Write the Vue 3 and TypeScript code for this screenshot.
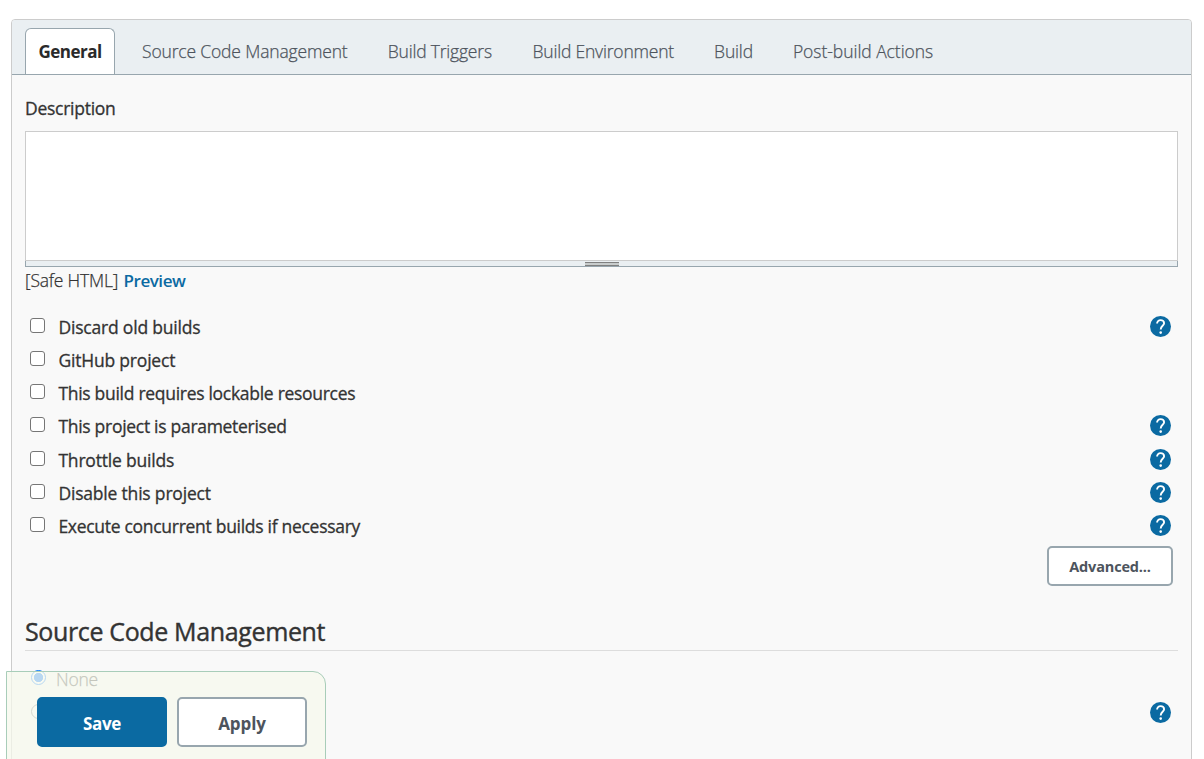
<script setup lang="ts">
interface Option { label: string; help: boolean; cls: string }
interface Tab { label: string; cls: string }

const tabs: Tab[] = [
  { label: 'General', cls: 'active' },
  { label: 'Source Code Management', cls: 't-scm' },
  { label: 'Build Triggers', cls: 't-triggers' },
  { label: 'Build Environment', cls: 't-env' },
  { label: 'Build', cls: 't-build' },
  { label: 'Post-build Actions', cls: 't-post' },
]
const options: Option[] = [
  { label: 'Discard old builds', help: true, cls: 'loose' },
  { label: 'GitHub project', help: false, cls: 'loose' },
  { label: 'This build requires lockable resources', help: false, cls: '' },
  { label: 'This project is parameterised', help: true, cls: '' },
  { label: 'Throttle builds', help: true, cls: 'loose' },
  { label: 'Disable this project', help: true, cls: 'loose' },
  { label: 'Execute concurrent builds if necessary', help: true, cls: '' },
]
</script>

<template>
  <div class="page">
    <main class="panel">
      <nav class="tabs">
        <a v-for="t in tabs" :key="t.label" class="tab" :class="t.cls"><span>{{ t.label }}</span></a>
      </nav>
      <section class="content">
        <div class="field-label"><span>Description</span></div>
        <div class="editor">
          <textarea class="area"></textarea>
          <div class="grip"><i></i></div>
        </div>
        <div class="markup"><span class="safe">[Safe HTML]</span><a class="preview">Preview</a></div>
        <div class="options">
          <div v-for="o in options" :key="o.label" class="option">
            <input type="checkbox" class="check" />
            <label class="label" :class="o.cls">{{ o.label }}</label>
            <svg v-if="o.help" class="help" viewBox="0 0 21 21">
              <circle cx="10.5" cy="10.5" r="10.5" fill="#0b6aa2" />
              <path d="M7.1 7.6C7.1 5.5 8.6 4.1 10.6 4.1S14.1 5.5 14.1 7.3C14.1 9.8 10.7 9.9 10.7 13.4" fill="none" stroke="#fff" stroke-width="1.9" />
              <circle cx="10.7" cy="16.6" r="1.3" fill="#fff" />
            </svg>
          </div>
        </div>
        <div class="advanced-row"><button class="btn advanced">Advanced...</button></div>
        <h2 class="heading"><span>Source Code Management</span></h2>
        <div class="radio-row">
          <span class="radio on"></span><span class="none">None</span>
        </div>
        <div class="radio-row second">
          <span class="radio"></span>
          <svg class="help" viewBox="0 0 21 21">
            <circle cx="10.5" cy="10.5" r="10.5" fill="#0b6aa2" />
            <path d="M7.1 7.6C7.1 5.5 8.6 4.1 10.6 4.1S14.1 5.5 14.1 7.3C14.1 9.8 10.7 9.9 10.7 13.4" fill="none" stroke="#fff" stroke-width="1.9" />
            <circle cx="10.7" cy="16.6" r="1.3" fill="#fff" />
          </svg>
        </div>
      </section>
    </main>
    <footer class="actions">
      <button class="btn save">Save</button>
      <button class="btn apply">Apply</button>
    </footer>
  </div>
</template>

<style>
html, body { margin: 0; overflow: hidden; background: #fff; }
</style>

<style scoped>
* { box-sizing: border-box; }
.page {
  position: relative; height: 759px; overflow: hidden; padding: 19px 12px 0 11px;
  font-family: "Open Sans", "Noto Sans", sans-serif; font-size: 17.5px; color: #333; background: #fff;
}
.panel { height: 760px; border: 1px solid #ccc; border-radius: 4px 4px 0 0; background: #f9f9f9; overflow: hidden; }
.tabs { display: flex; gap: 13px; height: 55px; padding: 8px 13px 0; background: #eaeff2; border-bottom: 1px solid #98a6ae; }
.tab {
  height: 46px; padding: 0 13px; border: 1px solid transparent; border-bottom: 0; line-height: 44px;
  font-weight: 300; color: #4d545d; white-space: nowrap; letter-spacing: -.16px; -webkit-text-stroke: .25px currentColor;
}
.t-triggers, .t-env { letter-spacing: -.2px; }
.t-triggers { margin-left: -.8px; }
.t-env { margin-left: -.3px; }
.t-build { margin-left: -.9px; }
.t-post { margin-left: -1px; letter-spacing: -.05px; }
.tab.active {
  width: 90px; padding-left: 12.5px; background: #fff; border-color: #98a6ae; border-radius: 6px 6px 0 0; font-size: 17px;
  font-weight: 700; line-height: 46px; color: #2a2a2a; letter-spacing: -.5px; -webkit-text-stroke: 0;
}
.content { padding: 0 13px; }
.field-label { height: 56px; padding-top: 21px; line-height: 24px; letter-spacing: -.26px; -webkit-text-stroke: .3px currentColor; }
.editor { height: 136px; display: flex; flex-direction: column; }
.area { display: block; width: 100%; height: 130px; border: 1px solid #ccc; margin: 0; padding: 0; background: #fff; resize: none; outline: none; }
.grip { display: flex; justify-content: center; height: 6px; background: #eaeff2; border: 1px solid #98a6ae; border-top: 0; }
.grip i { width: 34px; height: 4px; margin-top: 1px; background: #c8cccc; border-top: 1px solid #808080; border-bottom: 1px solid #808080; }
.markup { display: flex; height: 43px; padding-top: 1px; line-height: 24px; }
.safe { width: 98.5px; font-weight: 300; letter-spacing: -.2px; white-space: nowrap; -webkit-text-stroke: .25px currentColor; }
.preview { padding-top: 1px; font-size: 17px; font-weight: 600; color: #0b6aa2; letter-spacing: -.45px; }
.option { display: flex; align-items: flex-start; height: 33.17px; padding-left: 5px; padding-right: 7px; }
.check { appearance: none; width: 15px; height: 15px; margin: 8px 13.4px 0 0; border: 1px solid #767676; border-radius: 3px; background: #fff; }
.label { line-height: 24px; padding-top: 5px; white-space: nowrap; letter-spacing: -.29px; -webkit-text-stroke: .3px currentColor; }
.label.loose { letter-spacing: -.19px; }
.help { width: 21px; height: 21px; margin: 6px 0 0 auto; display: block; }
.btn { font-family: inherit; font-weight: 700; margin: 0; border: 2px solid #98a6ae; border-radius: 5px; background: #fff; color: #4d545d; }
.advanced-row { display: flex; justify-content: flex-end; padding-right: 5px; height: 67px; padding-top: 4px; }
.advanced { width: 126px; height: 40px; padding: 0; font-size: 14.5px; letter-spacing: -.17px; }
.heading {
  margin: 0; height: 42px; border-bottom: 1px solid #ddd; font-size: 25px; font-weight: 400; line-height: 44px;
  white-space: nowrap; letter-spacing: -.36px; -webkit-text-stroke: .4px currentColor;
}
.radio-row { display: flex; height: 34px; padding: 19px 7px 0 6px; }
.radio { width: 15px; height: 15px; border: 1px solid #767676; border-radius: 50%; background: #fff; }
.radio.on { border-color: #0075ff; background: radial-gradient(circle, #0075ff 0 4.3px, #fff 5px); }
.none { margin: -3px 0 0 10px; font-weight: 300; line-height: 24px; letter-spacing: -.2px; -webkit-text-stroke: .25px currentColor; }
.second .help { margin-top: -2px; }
.actions {
  position: absolute; left: 6px; top: 671px; width: 320px; height: 100px; display: flex; gap: 10px; padding: 25px 0 0 30px;
  background: rgba(245, 248, 236, .75); border: 1px solid #a8cdb9; border-radius: 0 13px 0 0;
}
.save, .apply { width: 130px; height: 50px; padding: 2px 0 0; font-size: 17px; letter-spacing: -.1px; }
.save { background: #0b6aa2; border-color: #0b6aa2; color: #fff; letter-spacing: -.3px; }
</style>
